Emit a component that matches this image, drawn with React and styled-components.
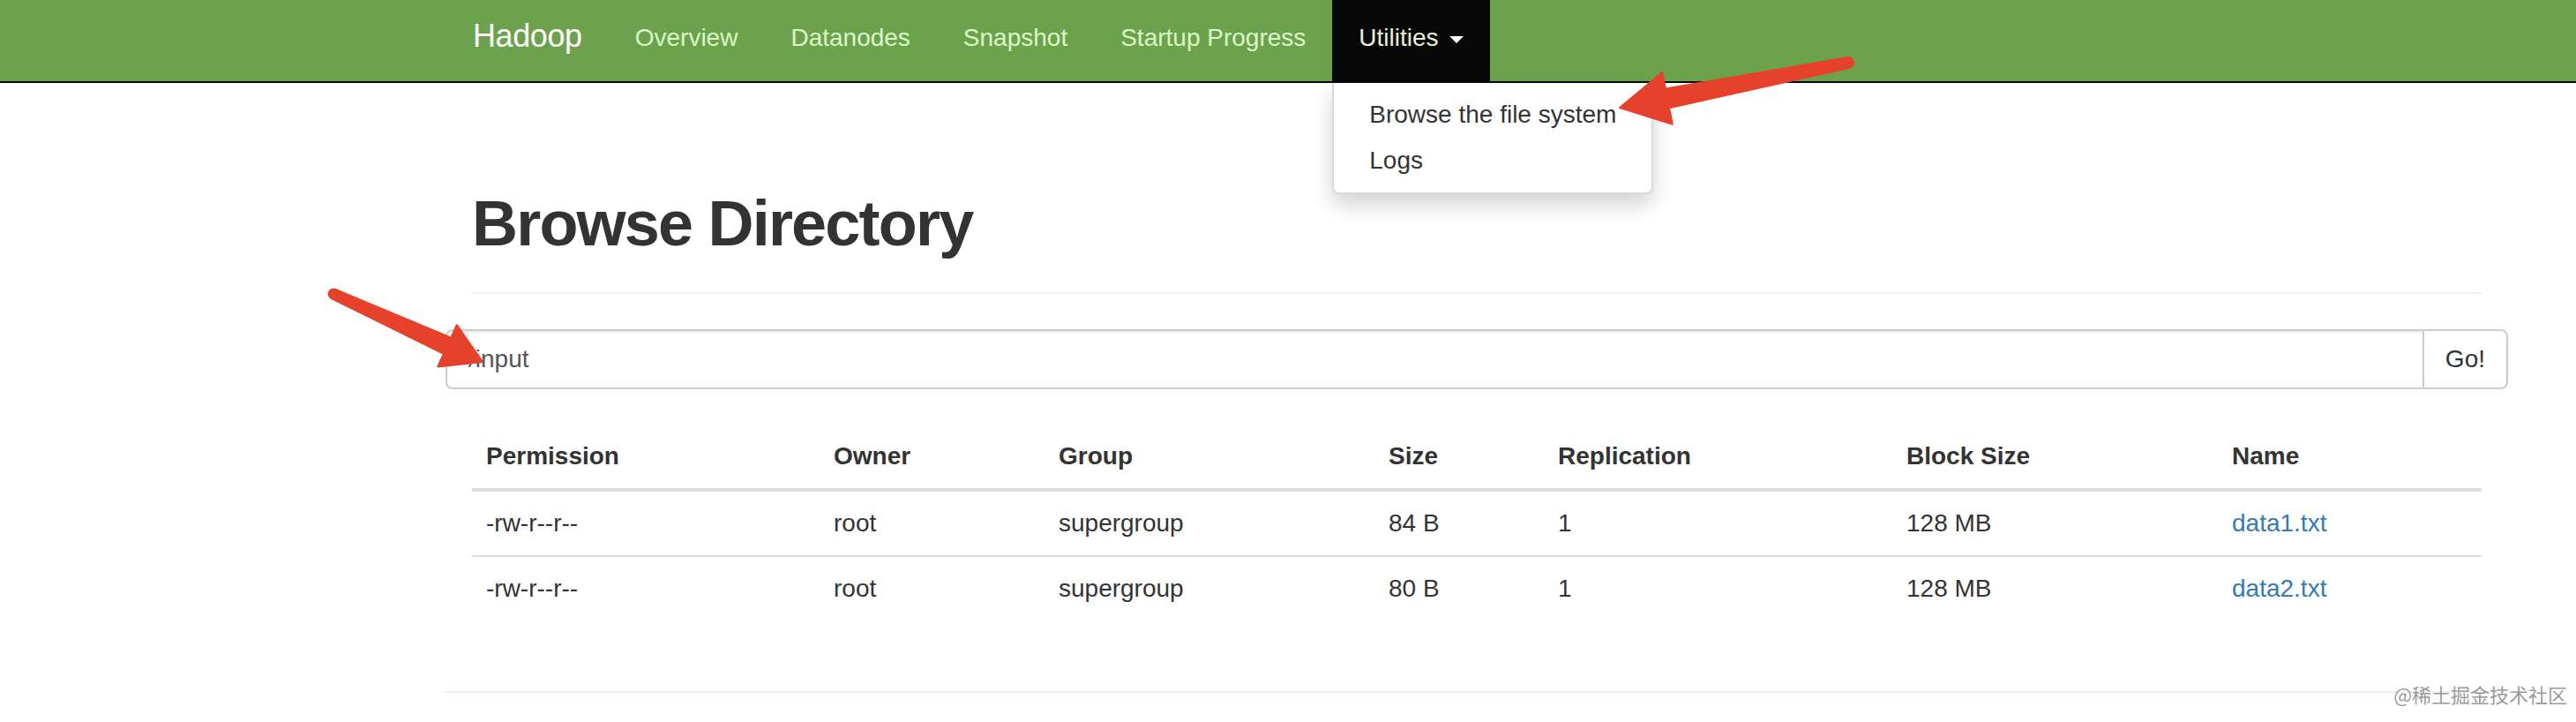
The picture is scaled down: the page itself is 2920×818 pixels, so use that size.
import React from 'react';
import styled, { createGlobalStyle } from 'styled-components';

const GlobalStyle = createGlobalStyle`
  html, body {
    margin: 0;
    padding: 0;
    background: #fff;
  }
  body {
    font-family: "Liberation Sans", Helvetica, Arial, sans-serif;
    font-size: 28px;
    line-height: 40px;
    color: #333;
  }
  * {
    box-sizing: border-box;
  }
`;

const Page = styled.div`
  position: relative;
  width: 2920px;
  min-height: 818px;
  overflow: hidden;
`;

const Nav = styled.header`
  height: 94px;
  background-color: #6ca24c;
  border-bottom: 2px solid #080808;
`;

const NavInner = styled.ul`
  display: flex;
  margin: 0;
  padding: 0 0 0 506px;
  list-style: none;
  height: 92px;
`;

const Brand = styled.a`
  display: block;
  padding: 21px 30px 31px;
  font-size: 36px;
  line-height: 40px;
  color: #fff;
  text-decoration: none;
  letter-spacing: -0.4px;
`;

const NavItem = styled.li`
  position: relative;
  background: ${({ $active }) => ($active ? '#080808' : 'transparent')};
`;

const NavLink = styled.a`
  display: block;
  padding: 23px 30px 29px;
  font-size: 28px;
  line-height: 40px;
  color: ${({ $active }) => ($active ? '#e9eedb' : '#dcf7c8')};
  text-decoration: none;
  white-space: nowrap;
`;

const Caret = styled.b`
  display: inline-block;
  width: 0;
  height: 0;
  margin-left: 12px;
  vertical-align: middle;
  border-top: 8px solid #fff;
  border-left: 8px solid transparent;
  border-right: 8px solid transparent;
`;

const DropdownMenu = styled.ul`
  position: absolute;
  top: calc(100% + 2px);
  left: 0;
  z-index: 5;
  min-width: 320px;
  margin: 0;
  padding: 10px 0;
  list-style: none;
  background: #fff;
  border: 2px solid rgba(0, 0, 0, 0.15);
  border-top: 0;
  border-radius: 0 0 8px 8px;
  box-shadow: 0 12px 24px rgba(0, 0, 0, 0.175);
`;

const DropdownItem = styled.a`
  display: block;
  padding: 6px 40px;
  line-height: 40px;
  color: #333;
  text-decoration: none;
  white-space: nowrap;
`;

const Container = styled.main`
  width: 2278px;
  margin-left: 535px;
`;

const PageHeader = styled.div`
  margin: 0 0 40px;
  padding: 120px 0 18px;
  border-bottom: 2px solid #eee;
`;

const Title = styled.h1`
  margin: 0 0 20px;
  font-size: 72px;
  line-height: 79px;
  font-weight: 700;
  letter-spacing: -1.8px;
  color: #333;
`;

const InputGroup = styled.form`
  display: flex;
  height: 68px;
  margin: 0 -30px;
`;

const PathInput = styled.input`
  flex: 1;
  height: 68px;
  padding: 12px 24px;
  font-family: inherit;
  font-size: 28px;
  color: #555;
  border: 2px solid #ccc;
  border-radius: 8px 0 0 8px;
  box-shadow: inset 0 2px 2px rgba(0, 0, 0, 0.075);
  outline: none;
`;

const GoButton = styled.button`
  height: 68px;
  margin-left: -2px;
  padding: 12px 24px;
  font-family: inherit;
  font-size: 28px;
  line-height: 40px;
  color: #333;
  background: #fff;
  border: 2px solid #ccc;
  border-radius: 0 8px 8px 0;
`;

const Table = styled.table`
  width: 100%;
  margin: 40px 0 0;
  border-collapse: collapse;
  table-layout: fixed;
`;

const Col = styled.col`
  width: ${({ $w }) => $w}px;
`;

const Th = styled.th`
  padding: 16px;
  text-align: left;
  font-weight: 700;
  line-height: 40px;
  border-bottom: 4px solid #ddd;
`;

const Td = styled.td`
  padding: 16px;
  line-height: 40px;
  border-top: 2px solid #ddd;
`;

const FileLink = styled.a`
  color: #337ab7;
  text-decoration: none;
`;

const Rule = styled.hr`
  margin: 80px -30px 0;
  border: 0;
  border-top: 2px solid #eee;
`;

const Overlay = styled.svg`
  position: absolute;
  top: 0;
  left: 0;
  pointer-events: none;
  z-index: 10;
`;

const Watermark = styled.div`
  position: absolute;
  right: 10px;
  top: 771px;
  font-family: "Noto Sans CJK SC", "Liberation Sans", sans-serif;
  font-size: 22px;
  line-height: 30px;
  color: #9a9a9a;
  text-shadow: 0 0 2px #fff;
  z-index: 11;
`;

const columns = [
  { label: 'Permission', width: 394 },
  { label: 'Owner', width: 255 },
  { label: 'Group', width: 374 },
  { label: 'Size', width: 192 },
  { label: 'Replication', width: 395 },
  { label: 'Block Size', width: 369 },
  { label: 'Name', width: 299 },
];

const files = [
  { perm: '-rw-r--r--', owner: 'root', group: 'supergroup', size: '84 B', repl: '1', block: '128 MB', name: 'data1.txt' },
  { perm: '-rw-r--r--', owner: 'root', group: 'supergroup', size: '80 B', repl: '1', block: '128 MB', name: 'data2.txt' },
];

const navLinks = ['Overview', 'Datanodes', 'Snapshot', 'Startup Progress'];

const Arrows = () => (
  <Overlay width="2920" height="818" viewBox="0 0 2920 818">
    <g fill="#e6422b" stroke="#e6422b" strokeWidth="2" strokeLinejoin="round">
      <polygon points="2096.2,76.9 1892.1,122.2 1895.8,140.8 1836,122 1884.2,82 1887.9,100.6 2093.8,65.1" />
      <circle cx="2095" cy="71" r="6" />
      <polygon points="375.7,338 502.9,400.8 496.2,415.4 547,410 517.8,368 511.2,382.6 380.3,328" />
      <circle cx="378" cy="333" r="5.5" />
    </g>
  </Overlay>
);

const App = () => {
  return (
    <Page>
      <GlobalStyle />
      <Nav>
        <NavInner>
          <li>
            <Brand href="#">Hadoop</Brand>
          </li>
          {navLinks.map((label) => (
            <NavItem key={label}>
              <NavLink href="#">{label}</NavLink>
            </NavItem>
          ))}
          <NavItem $active>
            <NavLink href="#" $active>
              Utilities<Caret />
            </NavLink>
            <DropdownMenu>
              <li><DropdownItem href="#">Browse the file system</DropdownItem></li>
              <li><DropdownItem href="#">Logs</DropdownItem></li>
            </DropdownMenu>
          </NavItem>
        </NavInner>
      </Nav>

      <Container>
        <PageHeader>
          <Title>Browse Directory</Title>
        </PageHeader>

        <InputGroup onSubmit={(e) => e.preventDefault()}>
          <PathInput type="text" defaultValue="/input" />
          <GoButton type="submit">Go!</GoButton>
        </InputGroup>

        <Table>
          <colgroup>
            {columns.map((c) => (
              <Col key={c.label} $w={c.width} />
            ))}
          </colgroup>
          <thead>
            <tr>
              {columns.map((c) => (
                <Th key={c.label}>{c.label}</Th>
              ))}
            </tr>
          </thead>
          <tbody>
            {files.map((f) => (
              <tr key={f.name}>
                <Td>{f.perm}</Td>
                <Td>{f.owner}</Td>
                <Td>{f.group}</Td>
                <Td>{f.size}</Td>
                <Td>{f.repl}</Td>
                <Td>{f.block}</Td>
                <Td><FileLink href="#">{f.name}</FileLink></Td>
              </tr>
            ))}
          </tbody>
        </Table>

        <Rule />
      </Container>

      <Arrows />
      <Watermark>@稀土掘金技术社区</Watermark>
    </Page>
  );
};

export default App;
